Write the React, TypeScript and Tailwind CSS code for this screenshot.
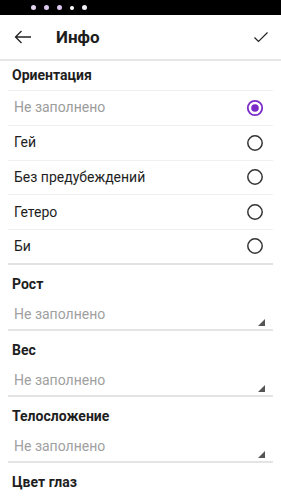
import React from "react";

const options = [
  { label: "Не заполнено", selected: true, muted: true },
  { label: "Гей" },
  { label: "Без предубеждений" },
  { label: "Гетеро" },
  { label: "Би" },
];

const sections = ["Рост", "Вес", "Телосложение"];

function Radio({ selected }: { selected?: boolean }) {
  return (
    <svg width="18" height="18" viewBox="0 0 18 18">
      {selected ? (
        <>
          <circle cx="9" cy="9" r="7.2" fill="none" stroke="#7a2bc8" strokeWidth="1.8" />
          <circle cx="9" cy="9" r="3.8" fill="#7a2bc8" />
        </>
      ) : (
        <circle cx="9" cy="9" r="7.2" fill="none" stroke="#333" strokeWidth="1.5" />
      )}
    </svg>
  );
}

export default function App() {
  return (
    <div
      className="w-[281px] h-[500px] overflow-hidden bg-white flex flex-col"
      style={{ fontFamily: "Roboto, 'Noto Sans', sans-serif" }}
    >
      <div className="h-[15px] bg-black flex items-center pl-[31px] gap-[8px] shrink-0">
        <span className="w-[5px] h-[5px] rounded-full bg-[#e4d4f0]" />
        <span className="w-[5px] h-[5px] rounded-full bg-[#dcc8ee]" />
        <span className="w-[5px] h-[5px] rounded-full bg-[#dcc8ee]" />
        <span className="w-[4px] h-[4px] rounded-full bg-white" />
        <span className="w-[5px] h-[5px] rounded-full bg-[#f4f0f8]" />
      </div>
      <div className="h-[44px] flex items-center shrink-0 pl-[14px] pr-[12px]">
        <svg width="18" height="14" viewBox="0 0 18 14" fill="none" stroke="#222" strokeWidth="1.3">
          <path d="M17 7H1.5M7.5 1L1.5 7l6 6" />
        </svg>
        <div className="ml-[24px] text-[17px] font-bold text-[#1c1c1c] leading-none">Инфо</div>
        <div className="flex-1" />
        <svg width="16" height="12" viewBox="0 0 16 12" fill="none" stroke="#222" strokeWidth="1.2">
          <path d="M1.5 6.5l4 4L14.5 1.5" />
        </svg>
      </div>
      <div className="h-[2px] bg-[#e6e6e6] shrink-0" />
      <div className="px-[8px] shrink-0">
        <div className="h-[30px] flex items-center pl-[4px] text-[14px] font-bold text-[#1e1e1e] border-b border-[#f0f0f0]">
          Ориентация
        </div>
        {options.map((o, i) => (
          <div
            key={o.label}
            className={
              i === options.length - 1
                ? "h-[34.75px] flex items-center justify-between pl-[6px] pr-[9px] border-b-2 border-[#e2e2e2]"
                : "h-[34.75px] flex items-center justify-between pl-[6px] pr-[9px] border-b border-[#f0f0f0]"
            }
          >
            <span className={o.muted ? "text-[14px] text-[#9c9c9c]" : "text-[14px] text-[#1e1e1e]"}>
              {o.label}
            </span>
            <Radio selected={o.selected} />
          </div>
        ))}
        {sections.map((s) => (
          <div key={s} className="flex flex-col">
            <div className="h-[28px] pt-[10px] pl-[4px] text-[14px] font-bold leading-[18px] text-[#1e1e1e]">
              {s}
            </div>
            <div className="relative h-[38px] flex items-end pb-[5px] pl-[6px] border-b-2 border-[#e4e4e4]">
              <span className="text-[14px] leading-[20px] text-[#a0a0a0]">Не заполнено</span>
              <svg className="absolute right-[8px] bottom-[3px]" width="7" height="7" viewBox="0 0 7 7">
                <path d="M7 0V7H0Z" fill="#555" />
              </svg>
            </div>
          </div>
        ))}
        <div className="h-[28px] pt-[10px] pl-[4px] text-[14px] font-bold leading-[18px] text-[#1e1e1e]">
          Цвет глаз
        </div>
      </div>
    </div>
  );
}
